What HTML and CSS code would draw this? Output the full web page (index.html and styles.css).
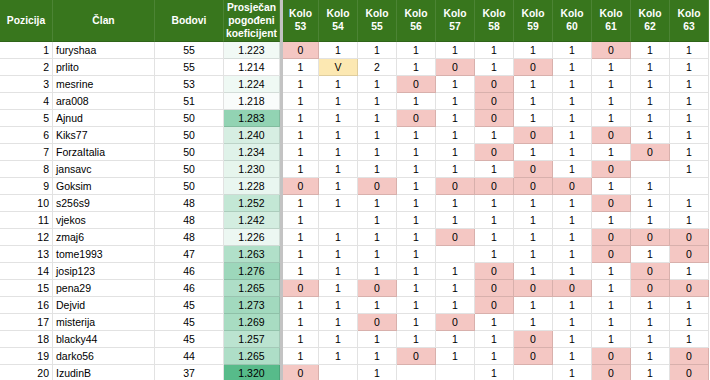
FILE: index.html
```html
<!DOCTYPE html>
<html lang="hr">
<head>
<meta charset="utf-8">
<title>Tablica</title>
<link rel="stylesheet" href="styles.css">
</head>
<body>
<table class="sheet">
<colgroup>
<col class="c-pos"><col class="c-name"><col class="c-pts"><col class="c-koef"><col class="c-sep">
<col class="c-k1"><col class="c-k"><col class="c-k"><col class="c-k"><col class="c-k"><col class="c-k"><col class="c-k"><col class="c-k"><col class="c-k"><col class="c-k"><col class="c-k">
</colgroup>
<thead>
<tr>
<th>Pozicija</th><th>Član</th><th>Bodovi</th><th>Prosječan pogođeni koeficijent</th><th class="sep"></th>
<th>Kolo<br>53</th><th>Kolo<br>54</th><th>Kolo<br>55</th><th>Kolo<br>56</th><th>Kolo<br>57</th><th>Kolo<br>58</th><th>Kolo<br>59</th><th>Kolo<br>60</th><th>Kolo<br>61</th><th>Kolo<br>62</th><th>Kolo<br>63</th>
</tr>
</thead>
<tbody>
<tr><td class="pos">1</td><td class="name">furyshaa</td><td>55</td><td style="background:#f1f9f5">1.223</td><td class="sep"></td><td class="z">0</td><td>1</td><td>1</td><td>1</td><td>1</td><td>1</td><td>1</td><td>1</td><td class="z">0</td><td>1</td><td>1</td></tr>
<tr><td class="pos">2</td><td class="name">prlito</td><td>55</td><td style="background:#ffffff">1.214</td><td class="sep"></td><td>1</td><td class="v">V</td><td>2</td><td>1</td><td class="z">0</td><td>1</td><td class="z">0</td><td>1</td><td>1</td><td>1</td><td>1</td></tr>
<tr><td class="pos">3</td><td class="name">mesrine</td><td>53</td><td style="background:#eff9f4">1.224</td><td class="sep"></td><td>1</td><td>1</td><td>1</td><td class="z">0</td><td>1</td><td class="z">0</td><td>1</td><td>1</td><td>1</td><td>1</td><td>1</td></tr>
<tr><td class="pos">4</td><td class="name">ara008</td><td>51</td><td style="background:#f9fcfb">1.218</td><td class="sep"></td><td>1</td><td>1</td><td>1</td><td>1</td><td>1</td><td class="z">0</td><td>1</td><td>1</td><td>1</td><td>1</td><td>1</td></tr>
<tr><td class="pos">5</td><td class="name">Ajnud</td><td>50</td><td style="background:#92d3b3">1.283</td><td class="sep"></td><td>1</td><td>1</td><td>1</td><td class="z">0</td><td>1</td><td class="z">0</td><td>1</td><td>1</td><td>1</td><td>1</td><td>1</td></tr>
<tr><td class="pos">6</td><td class="name">Kiks77</td><td>50</td><td style="background:#d6eee2">1.240</td><td class="sep"></td><td>1</td><td>1</td><td>1</td><td>1</td><td>1</td><td>1</td><td class="z">0</td><td>1</td><td class="z">0</td><td>1</td><td>1</td></tr>
<tr><td class="pos">7</td><td class="name">ForzaItalia</td><td>50</td><td style="background:#dff2e9">1.234</td><td class="sep"></td><td>1</td><td>1</td><td>1</td><td>1</td><td>1</td><td class="z">0</td><td>1</td><td>1</td><td>1</td><td class="z">0</td><td>1</td></tr>
<tr><td class="pos">8</td><td class="name">jansavc</td><td>50</td><td style="background:#e6f5ed">1.230</td><td class="sep"></td><td>1</td><td>1</td><td>1</td><td>1</td><td>1</td><td>1</td><td class="z">0</td><td>1</td><td class="z">0</td><td></td><td>1</td></tr>
<tr><td class="pos">9</td><td class="name">Goksim</td><td>50</td><td style="background:#e9f6f0">1.228</td><td class="sep"></td><td class="z">0</td><td>1</td><td class="z">0</td><td>1</td><td class="z">0</td><td class="z">0</td><td class="z">0</td><td class="z">0</td><td>1</td><td>1</td><td></td></tr>
<tr><td class="pos">10</td><td class="name">s256s9</td><td>48</td><td style="background:#c3e7d5">1.252</td><td class="sep"></td><td>1</td><td>1</td><td>1</td><td>1</td><td>1</td><td>1</td><td>1</td><td>1</td><td class="z">0</td><td>1</td><td>1</td></tr>
<tr><td class="pos">11</td><td class="name">vjekos</td><td>48</td><td style="background:#d3ede0">1.242</td><td class="sep"></td><td>1</td><td></td><td>1</td><td>1</td><td>1</td><td>1</td><td>1</td><td>1</td><td>1</td><td>1</td><td>1</td></tr>
<tr><td class="pos">12</td><td class="name">zmaj6</td><td>48</td><td style="background:#ecf7f2">1.226</td><td class="sep"></td><td>1</td><td>1</td><td>1</td><td>1</td><td class="z">0</td><td>1</td><td>1</td><td>1</td><td class="z">0</td><td class="z">0</td><td class="z">0</td></tr>
<tr><td class="pos">13</td><td class="name">tome1993</td><td>47</td><td style="background:#b1e0c9">1.263</td><td class="sep"></td><td>1</td><td>1</td><td>1</td><td>1</td><td></td><td>1</td><td>1</td><td>1</td><td class="z">0</td><td>1</td><td class="z">0</td></tr>
<tr><td class="pos">14</td><td class="name">josip123</td><td>46</td><td style="background:#9dd7bb">1.276</td><td class="sep"></td><td>1</td><td>1</td><td>1</td><td>1</td><td>1</td><td class="z">0</td><td>1</td><td>1</td><td>1</td><td class="z">0</td><td>1</td></tr>
<tr><td class="pos">15</td><td class="name">pena29</td><td>46</td><td style="background:#aedec7">1.265</td><td class="sep"></td><td class="z">0</td><td>1</td><td class="z">0</td><td>1</td><td>1</td><td class="z">0</td><td class="z">0</td><td class="z">0</td><td>1</td><td class="z">0</td><td class="z">0</td></tr>
<tr><td class="pos">16</td><td class="name">Dejvid</td><td>45</td><td style="background:#a2d9be">1.273</td><td class="sep"></td><td>1</td><td>1</td><td>1</td><td>1</td><td>1</td><td class="z">0</td><td>1</td><td>1</td><td>1</td><td>1</td><td>1</td></tr>
<tr><td class="pos">17</td><td class="name">misterija</td><td>45</td><td style="background:#a8dcc2">1.269</td><td class="sep"></td><td>1</td><td>1</td><td class="z">0</td><td>1</td><td class="z">0</td><td>1</td><td>1</td><td>1</td><td>1</td><td>1</td><td>1</td></tr>
<tr><td class="pos">18</td><td class="name">blacky44</td><td>45</td><td style="background:#bbe3d0">1.257</td><td class="sep"></td><td>1</td><td>1</td><td>1</td><td>1</td><td>1</td><td>1</td><td class="z">0</td><td>1</td><td>1</td><td>1</td><td>1</td></tr>
<tr><td class="pos">19</td><td class="name">darko56</td><td>44</td><td style="background:#aedec7">1.265</td><td class="sep"></td><td>1</td><td>1</td><td>1</td><td class="z">0</td><td>1</td><td>1</td><td class="z">0</td><td>1</td><td class="z">0</td><td>1</td><td class="z">0</td></tr>
<tr><td class="pos">20</td><td class="name">IzudinB</td><td>37</td><td style="background:#57bb8a">1.320</td><td class="sep"></td><td class="z">0</td><td></td><td>1</td><td></td><td></td><td>1</td><td></td><td>1</td><td class="z">0</td><td>1</td><td class="z">0</td></tr>
</tbody>
</table>
</body>
</html>
```

FILE: styles.css
```css
html, body {
  margin: 0;
  padding: 0;
  background: #ffffff;
}

.sheet {
  border-collapse: separate;
  border-spacing: 0;
  table-layout: fixed;
  width: 709px;
  font-family: "Liberation Sans", Arial, sans-serif;
  font-size: 10.5px;
  color: #000000;
}

.c-pos { width: 53px; }
.c-name { width: 102px; }
.c-pts { width: 69px; }
.c-koef { width: 56px; }
.c-sep { width: 3px; }
.c-k1 { width: 36px; }
.c-k { width: 39px; }

.sheet th,
.sheet td {
  box-sizing: border-box;
  padding: 0 2px;
  text-align: center;
  vertical-align: middle;
  overflow: hidden;
  white-space: nowrap;
}

.sheet th {
  height: 42px;
  padding-bottom: 1px;
  background: #38761d;
  color: #ffffff;
  font-weight: bold;
  font-size: 10.3px;
  line-height: 13px;
  white-space: normal;
  border-right: 1px solid rgba(255, 255, 255, 0.1);
  border-bottom: 1px solid #2f6419;
}

.sheet td {
  height: 17px;
  line-height: 16px;
  border-right: 1px solid rgba(0, 0, 0, 0.115);
  border-bottom: 1px solid rgba(0, 0, 0, 0.115);
}

.sheet .sep {
  background: #c3c3c3;
  border: 0;
  padding: 0;
}

.sheet td.pos {
  text-align: right;
  padding-right: 3px;
}

.sheet td.name {
  text-align: left;
  padding-left: 3px;
}

.sheet td.z {
  background: #f4c7c3;
}

.sheet td.v {
  background: #fce8b2;
}
```
